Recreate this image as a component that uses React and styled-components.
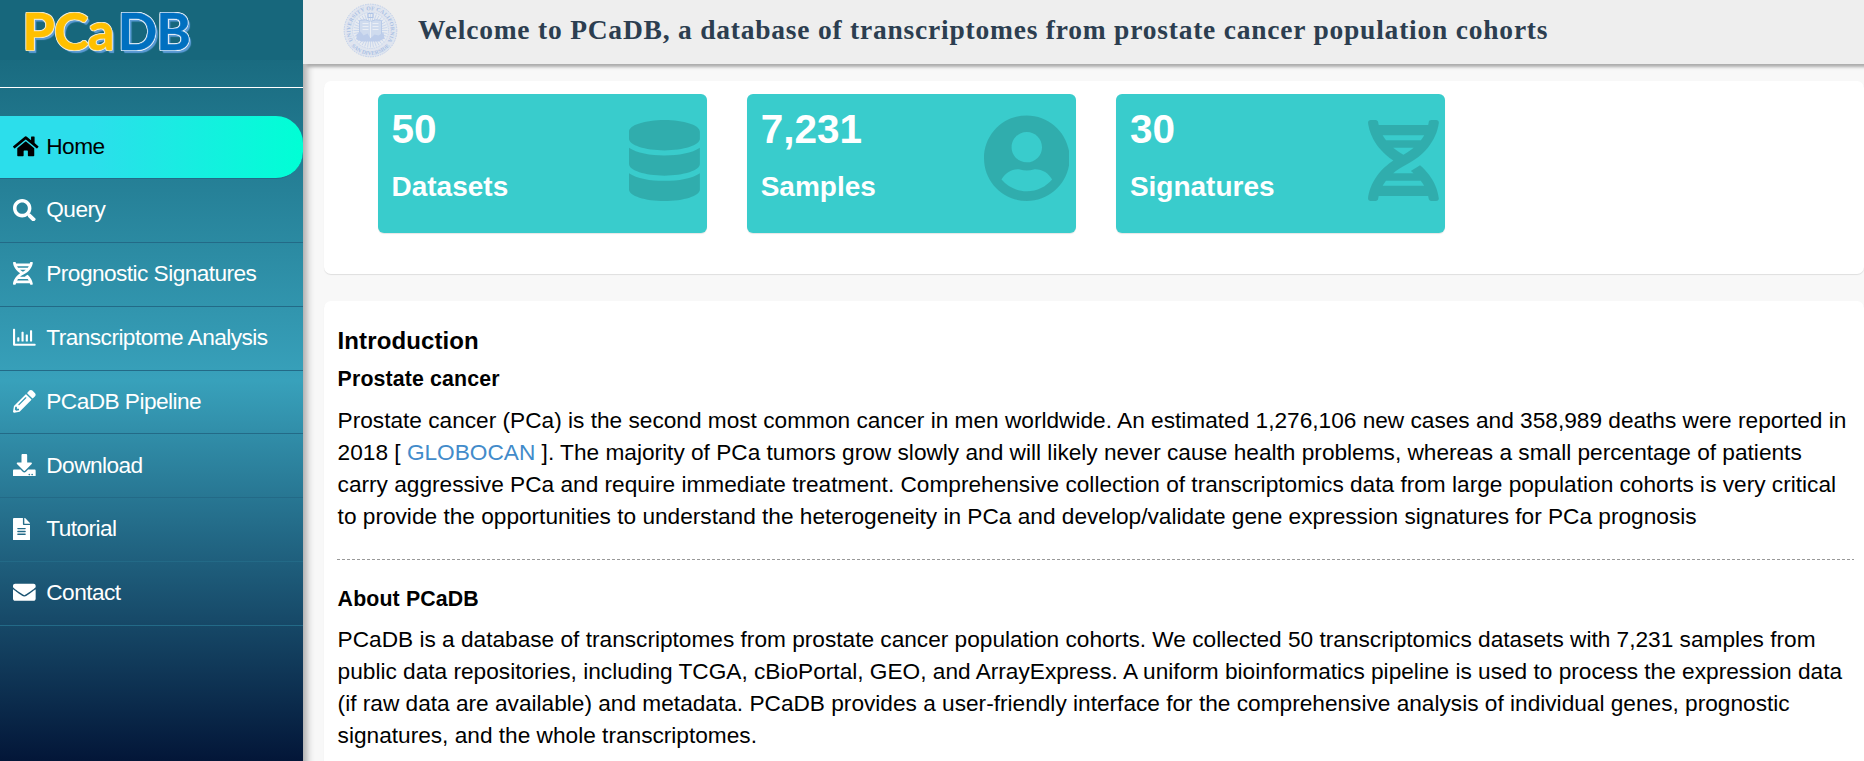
import React from "react";
import styled, { createGlobalStyle, css } from "styled-components";
import {
  FaHome, FaSearch, FaDna, FaRegChartBar, FaPencilAlt, FaDownload,
  FaFileAlt, FaEnvelope, FaDatabase, FaUserCircle,
} from "react-icons/fa";

const GlobalStyle = createGlobalStyle`
  *, *::before, *::after { box-sizing: border-box; }
  body {
    margin: 0;
    overflow: hidden;
    font-family: "Liberation Sans", Arial, sans-serif;
    color: #000;
    background: #f8f8f8;
  }
`;

const Page = styled.div`
  display: flex;
  height: 761px;
  width: 100%;
  overflow: hidden;
`;

const Sidebar = styled.aside`
  position: relative;
  z-index: 1;
  flex: 0 0 303px;
  background: linear-gradient(rgb(20, 97, 117) 0%, rgb(56, 161, 187) 50%, rgb(3, 22, 56) 100%);
  box-shadow: 4px 7px 7px #aaa;
`;

const Brand = styled.div`
  display: flex;
  height: 60px;
  padding-left: 22.5px;
  background: rgb(23, 103, 124);
`;

const Logo = styled.div`
  display: flex;
  gap: 4px;
  font-family: Lato, sans-serif;
  font-weight: 700;
  font-size: 52px;
  line-height: 60px;
`;

const LogoPart = styled.span`
  color: ${(p) => p.$color};
  letter-spacing: ${(p) => p.$spacing};
  -webkit-text-stroke: 0.5px ${(p) => p.$color};
  text-shadow:
    1px 0 ${(p) => p.$edge}, -1px 0 ${(p) => p.$edge}, 0 1px ${(p) => p.$edge}, 0 -1px ${(p) => p.$edge},
    0.9px 0.9px ${(p) => p.$edge}, -0.9px 0.9px ${(p) => p.$edge},
    0.9px -0.9px ${(p) => p.$edge}, -0.9px -0.9px ${(p) => p.$edge},
    2px 2px 1px #5b9bd5, 2.5px 2.5px 1px #5b9bd5;
`;

const Divider = styled.div`
  height: 28px;
  border-bottom: 1px solid #fff;
`;

const Nav = styled.nav`
  padding-top: 27.3px;
`;

const NavItem = styled.a`
  display: flex;
  align-items: center;
  height: 63.83px;
  padding: 0 0 1.4px 13px;
  border-bottom: 1px solid rgb(35, 106, 135);
  color: #fff;
  font-size: 22.67px;
  letter-spacing: -0.55px;
  white-space: nowrap;
  ${(p) =>
    p.$active &&
    css`
      height: 63.13px;
      margin-top: 0.7px;
      color: #000;
      background: linear-gradient(to right, rgb(44, 222, 235) 0%, rgb(44, 222, 235) 30%, rgb(0, 255, 213) 100%);
      border-radius: 0 27px 27px 0;
    `}
`;

const NavIcon = styled.span`
  display: flex;
  flex: 0 0 33.3px;
  svg {
    flex: none;
    height: 22.67px;
    width: ${(p) => (p.$ratio * 22.67).toFixed(2)}px;
  }
`;

const Main = styled.div`
  flex: 1;
  min-width: 0;
  display: flex;
  flex-direction: column;
`;

const Header = styled.header`
  position: relative;
  z-index: 2;
  flex: 0 0 64px;
  display: flex;
  align-items: flex-start;
  padding: 3px 0 0 40px;
  background: rgb(238, 238, 238);
  box-shadow: 3px 3px 3px #aaa;
`;

const Title = styled.h1`
  margin: 9px 0 0 20px;
  font-family: "Liberation Serif", Georgia, serif;
  font-size: 27.5px;
  line-height: 36px;
  font-weight: 700;
  letter-spacing: 0.78px;
  white-space: nowrap;
  color: #2c3e50;
`;

const Content = styled.main`
  padding: 17px 0 0 21px;
  display: flex;
  flex-direction: column;
  gap: 27px;
`;

const Panel = styled.section`
  flex: none;
  height: ${(p) => p.$height};
  padding: ${(p) => p.$padding};
  background: #fff;
  border-radius: 7px;
  box-shadow: 0 1px 1px rgba(0, 0, 0, 0.1);
`;

const Stats = styled.div`
  display: flex;
  gap: 40.7px;
`;

const StatCard = styled.div`
  display: flex;
  justify-content: space-between;
  width: 328.5px;
  height: 139px;
  padding: 0 6.3px 0 13.5px;
  color: #fff;
  background: #39cccc;
  border-radius: 6px;
  box-shadow: 0 1px 1px rgba(0, 0, 0, 0.1);
`;

const StatText = styled.div`
  padding-top: 11px;
  font-weight: 700;
`;

const StatValue = styled.div`
  font-size: 40.5px;
  line-height: 48px;
`;

const StatLabel = styled.div`
  margin-top: 16px;
  font-size: 28px;
  line-height: 36px;
`;

const StatIcon = styled.div`
  padding-top: ${(p) => p.$top}px;
  color: rgba(0, 0, 0, 0.15);
  svg {
    display: block;
    height: ${(p) => p.$size}px;
    width: ${(p) => (p.$size * p.$ratio).toFixed(2)}px;
  }
`;

const Heading = styled.h2`
  margin: 0 0 12px;
  font-size: 24px;
  line-height: 28px;
  letter-spacing: 0.1px;
`;

const SubHeading = styled.h3`
  margin: 0 0 ${(p) => p.$gap};
  font-size: 21.33px;
  line-height: 24px;
  letter-spacing: 0.13px;
`;

const Paragraph = styled.p`
  margin: 0;
  font-size: 22.67px;
  line-height: 32px;
  white-space: nowrap;
`;

const Link = styled.a`
  color: #428bca;
`;

const Rule = styled.hr`
  margin: 27px 10px 27px -0.6px;
  height: 1px;
  border: 0;
  background: repeating-linear-gradient(to right, #999 0 3px, transparent 3px 5px);
`;

const SealMark = styled.svg`
  flex: none;
  opacity: 0.9;
`;

function Seal() {
  const rays = Array.from({ length: 36 }, (_, i) => i * 10);
  return (
    <SealMark width="55" height="55" viewBox="-27.5 -27.5 55 55">
      <defs>
        <path id="sealTop" d="M-17.5 10 A20.2 20.2 0 1 1 17.5 10" />
        <path id="sealBottom" d="M-20 14 A24.4 24.4 0 0 0 20 14" />
      </defs>
      <circle r="26.3" fill="#dfe5f0" stroke="#b9cbea" strokeWidth="1" strokeDasharray="1.5 1" />
      <circle r="18" fill="#e7ebf2" stroke="#b9cbea" strokeWidth="0.8" strokeDasharray="1 0.8" />
      {rays.map((a) => (
        <line key={a} y1="-17" y2="-9" stroke="#c0d0eb" strokeWidth="0.8" transform={`rotate(${a})`} />
      ))}
      <g fill="#a3bbe3" fontFamily="Liberation Serif, serif" fontWeight="700" fontSize="5.6">
        <text textLength="85" lengthAdjust="spacing"><textPath href="#sealTop">UNIVERSITY OF CALIFORNIA</textPath></text>
        <text><textPath href="#sealBottom" startOffset="1.5">SAN DIVERSIDE</textPath></text>
      </g>
      <path d="M-11 -10 Q-5 -12 0 -9 Q5 -12 11 -10 V7 Q5 5 0 8 Q-5 5 -11 7Z" fill="#ccd9ee" stroke="#b3c7e8" strokeWidth="1" />
      <path d="M0 -9V8M-8 -7H-2M-8 -4H-2M-8 -1H-2M2 -7H8M2 -4H8M2 -1H8" stroke="#eaeef6" strokeWidth="1" />
      <path d="M-14 4l4-3 3 4 4-2 3 5 4-4 4 1 5-3 1 6-6 3H-9l-5-2Z" fill="#b8caea" />
      <rect x="-2.5" y="-17" width="5" height="4" fill="none" stroke="#a9c0e6" />
    </SealMark>
  );
}

const navItems = [
  { label: "Home", icon: FaHome, ratio: 576 / 512, active: true },
  { label: "Query", icon: FaSearch, ratio: 1 },
  { label: "Prognostic Signatures", icon: FaDna, ratio: 448 / 512 },
  { label: "Transcriptome Analysis", icon: FaRegChartBar, ratio: 1 },
  { label: "PCaDB Pipeline", icon: FaPencilAlt, ratio: 1 },
  { label: "Download", icon: FaDownload, ratio: 1 },
  { label: "Tutorial", icon: FaFileAlt, ratio: 384 / 512 },
  { label: "Contact", icon: FaEnvelope, ratio: 1 },
];

const stats = [
  { value: "50", label: "Datasets", icon: FaDatabase, ratio: 448 / 512, size: 81, top: 26 },
  { value: "7,231", label: "Samples", icon: FaUserCircle, ratio: 496 / 512, size: 88.4, top: 20 },
  { value: "30", label: "Signatures", icon: FaDna, ratio: 448 / 512, size: 81, top: 26 },
];

export default function App() {
  return (
    <>
      <GlobalStyle />
      <Page>
        <Sidebar>
          <Brand>
            <Logo>
              <LogoPart $color="#ffc000" $edge="#f0ead2" $spacing="-0.6px">PCa</LogoPart>
              <LogoPart $color="#0070c0" $edge="#e4eef8" $spacing="-0.8px">DB</LogoPart>
            </Logo>
          </Brand>
          <Divider />
          <Nav>
            {navItems.map(({ label, icon: Icon, ratio, active }) => (
              <NavItem key={label} $active={active}>
                <NavIcon $ratio={ratio}><Icon /></NavIcon>
                {label}
              </NavItem>
            ))}
          </Nav>
        </Sidebar>
        <Main>
          <Header>
            <Seal />
            <Title>Welcome to PCaDB, a database of transcriptomes from prostate cancer population cohorts</Title>
          </Header>
          <Content>
            <Panel $height="193px" $padding="13px 0 0 54px">
              <Stats>
                {stats.map(({ value, label, icon: Icon, ratio, size, top }) => (
                  <StatCard key={label}>
                    <StatText>
                      <StatValue>{value}</StatValue>
                      <StatLabel>{label}</StatLabel>
                    </StatText>
                    <StatIcon $size={size} $ratio={ratio} $top={top}><Icon /></StatIcon>
                  </StatCard>
                ))}
              </Stats>
            </Panel>
            <Panel $height="520px" $padding="26px 0 0 13.6px">
              <Heading>Introduction</Heading>
              <SubHeading $gap="13px">Prostate cancer</SubHeading>
              <Paragraph>
                Prostate cancer (PCa) is the second most common cancer in men worldwide. An estimated 1,276,106 new cases and 358,989 deaths were reported in<br />
                2018 [ <Link>GLOBOCAN</Link> ]. The majority of PCa tumors grow slowly and will likely never cause health problems, whereas a small percentage of patients<br />
                carry aggressive PCa and require immediate treatment. Comprehensive collection of transcriptomics data from large population cohorts is very critical<br />
                to provide the opportunities to understand the heterogeneity in PCa and develop/validate gene expression signatures for PCa prognosis
              </Paragraph>
              <Rule />
              <SubHeading $gap="12px">About PCaDB</SubHeading>
              <Paragraph>
                PCaDB is a database of transcriptomes from prostate cancer population cohorts. We collected 50 transcriptomics datasets with 7,231 samples from<br />
                public data repositories, including TCGA, cBioPortal, GEO, and ArrayExpress. A uniform bioinformatics pipeline is used to process the expression data<br />
                (if raw data are available) and metadata. PCaDB provides a user-friendly interface for the comprehensive analysis of individual genes, prognostic<br />
                signatures, and the whole transcriptomes.
              </Paragraph>
            </Panel>
          </Content>
        </Main>
      </Page>
    </>
  );
}
